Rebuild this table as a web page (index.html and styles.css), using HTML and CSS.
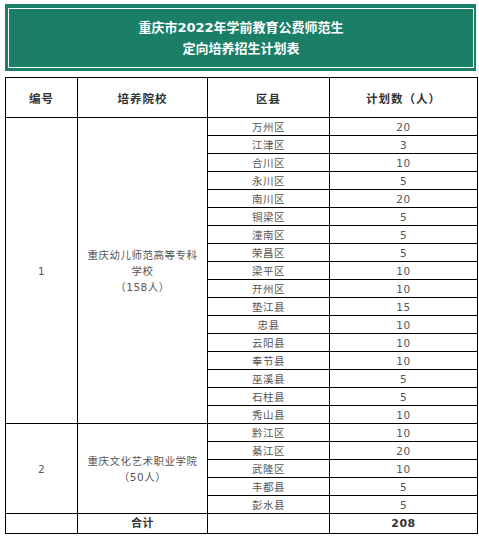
FILE: index.html
```html
<!DOCTYPE html>
<html lang="zh">
<head>
<meta charset="utf-8">
<title>重庆市2022年学前教育公费师范生定向培养招生计划表</title>
<link rel="stylesheet" href="styles.css">
</head>
<body>
<div class="page">
  <div class="banner">
    <div class="banner-inner">
      <div class="title">重庆市2022年学前教育公费师范生</div>
      <div class="title">定向培养招生计划表</div>
    </div>
  </div>
  <table class="plan">
    <colgroup>
      <col class="c1"><col class="c2"><col class="c3"><col class="c4">
    </colgroup>
    <thead>
      <tr class="head"><th>编号</th><th>培养院校</th><th>区县</th><th>计划数（人）</th></tr>
    </thead>
    <tbody>
      <tr><td rowspan="17">1</td><td rowspan="17" class="school">重庆幼儿师范高等专科<br>学校<br>（158人）</td><td>万州区</td><td>20</td></tr>
      <tr><td>江津区</td><td>3</td></tr>
      <tr><td>合川区</td><td>10</td></tr>
      <tr><td>永川区</td><td>5</td></tr>
      <tr><td>南川区</td><td>20</td></tr>
      <tr><td>铜梁区</td><td>5</td></tr>
      <tr><td>潼南区</td><td>5</td></tr>
      <tr><td>荣昌区</td><td>5</td></tr>
      <tr><td>梁平区</td><td>10</td></tr>
      <tr><td>开州区</td><td>10</td></tr>
      <tr><td>垫江县</td><td>15</td></tr>
      <tr><td>忠县</td><td>10</td></tr>
      <tr><td>云阳县</td><td>10</td></tr>
      <tr><td>奉节县</td><td>10</td></tr>
      <tr><td>巫溪县</td><td>5</td></tr>
      <tr><td>石柱县</td><td>5</td></tr>
      <tr><td>秀山县</td><td>10</td></tr>
      <tr><td rowspan="5">2</td><td rowspan="5" class="school">重庆文化艺术职业学院<br>（50人）</td><td>黔江区</td><td>10</td></tr>
      <tr><td>綦江区</td><td>20</td></tr>
      <tr><td>武隆区</td><td>10</td></tr>
      <tr><td>丰都县</td><td>5</td></tr>
      <tr><td>彭水县</td><td>5</td></tr>
      <tr class="total"><td></td><td class="strong">合计</td><td></td><td class="strong">208</td></tr>
    </tbody>
  </table>
</div>
</body>
</html>
```
FILE: styles.css
```css
html, body {
  margin: 0;
  padding: 0;
  background: #fff;
}
.page {
  padding: 4px 3px 0 5px;
  font-family: "DejaVu Sans", "Noto Sans CJK SC", sans-serif;
}
.banner {
  background: #1b7f68;
  padding: 4px 2px 3px 3px;
}
.banner-inner {
  border: 1px solid #fff;
  height: 58px;
  display: flex;
  flex-direction: column;
  justify-content: center;
  align-items: center;
  gap: 0;
}
.title {
  color: #fff;
  font-weight: bold;
  font-size: 13px;
  line-height: 21px;
  font-family: "DejaVu Sans", "Noto Sans CJK SC", sans-serif;
}
.plan {
  margin-top: 6px;
  border-collapse: collapse;
  table-layout: fixed;
  width: 472px;
}
.c1 { width: 72px; }
.c2 { width: 130px; }
.c3 { width: 122px; }
.c4 { width: 148px; }
.plan th, .plan td {
  border: 1px solid #000;
  padding: 0;
  text-align: center;
  vertical-align: middle;
}
.plan th {
  height: 39px;
  font-size: 11.5px;
  color: #333;
  font-weight: bold;
  letter-spacing: 1px;
}
.plan td {
  height: 17px;
  font-size: 10.5px;
  line-height: 14px;
  color: #555;
  letter-spacing: 0.5px;
}
.plan td.school {
  line-height: 16px;
}
.plan tr.total td {
  height: 19px;
}
.plan td.strong {
  font-weight: bold;
  color: #333;
  font-size: 11px;
}
```
